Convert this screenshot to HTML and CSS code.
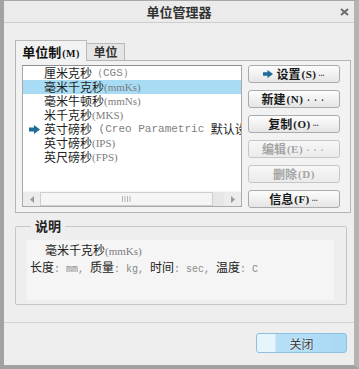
FILE: index.html
```html
<!DOCTYPE html>
<html lang="zh">

<head>
    <meta charset="UTF-8">
    <title>单位管理器</title>
    <link rel="stylesheet" href="styles.css">
</head>

<body>
    <div class="window">
        <div class="titlebar">
            <span></span>
            <span class="title">单位管理器</span>
            <span class="close">
                <svg width="9" height="8" viewBox="0 0 9 8">
                    <path d="M1 1L8 7M8 1L1 7" stroke="#6a6a6a" stroke-width="2" />
                </svg>
            </span>
        </div>

        <div class="client">
            <div class="tabs">
                <div class="tab active">单位制<span class="key">(M)</span></div>
                <div class="tab">单位</div>
            </div>

            <div class="panel">
                <div class="listbox">
                    <ul class="items">
                        <li><span class="mark"></span>厘米克秒<span class="mono">（CGS）</span></li>
                        <li class="selected"><span class="mark"></span>毫米千克秒<span class="abbr">(mmKs)</span></li>
                        <li><span class="mark"></span>毫米牛顿秒<span class="abbr">(mmNs)</span></li>
                        <li><span class="mark"></span>米千克秒<span class="abbr">(MKS)</span></li>
                        <li>
                            <span class="mark">
                                <svg width="11" height="9" viewBox="0 0 11 9">
                                    <path d="M0 2.5H5V0L11 4.5L5 9V6.5H0Z" fill="#1f6d99" />
                                </svg>
                            </span>英寸磅秒<span class="mono">&nbsp;(Creo Parametric&nbsp;</span>默认设置<span class="mono">)</span>
                        </li>
                        <li><span class="mark"></span>英寸磅秒<span class="abbr">(IPS)</span></li>
                        <li><span class="mark"></span>英尺磅秒<span class="abbr">(FPS)</span></li>
                    </ul>
                    <div class="hscroll">
                        <span class="sb-btn">
                            <svg width="4" height="7" viewBox="0 0 4 7"><path d="M4 0L0 3.5L4 7Z" fill="#9a9a9a" /></svg>
                        </span>
                        <span class="sb-thumb">
                            <svg width="9" height="6" viewBox="0 0 9 6">
                                <path d="M0.5 0V6M3 0V6M5.5 0V6M8 0V6" stroke="#b4b4b4" stroke-width="1" />
                            </svg>
                        </span>
                        <span class="sb-track"></span>
                        <span class="sb-btn">
                            <svg width="4" height="7" viewBox="0 0 4 7"><path d="M0 0L4 3.5L0 7Z" fill="#9a9a9a" /></svg>
                        </span>
                    </div>
                </div>

                <div class="actions">
                    <button class="btn">
                        <svg width="10" height="8" viewBox="0 0 10 8">
                            <path d="M0 2.2H4.5V0L10 4L4.5 8V5.8H0Z" fill="#1f6d99" />
                        </svg>
                        设置<span class="key">(S)</span><span class="dots">…</span>
                    </button>
                    <button class="btn">新建<span class="key">(N)</span><span class="dots">...</span></button>
                    <button class="btn">复制<span class="key">(O)</span><span class="dots">…</span></button>
                    <button class="btn" disabled>编辑<span class="key">(E)</span><span class="dots">...</span></button>
                    <button class="btn" disabled>删除<span class="key">(D)</span></button>
                    <button class="btn">信息<span class="key">(F)</span><span class="dots">…</span></button>
                </div>
            </div>

            <fieldset class="info">
                <legend>说明</legend>
                <div class="info-body">
                    <p class="info-name">毫米千克秒<span class="abbr">(mmKs)</span></p>
                    <p>长度<span class="unit">: mm, </span>质量<span class="unit">: kg, </span>时间<span class="unit">: sec, </span>温度<span class="unit">: C</span></p>
                </div>
            </fieldset>

            <div class="footer">
                <button class="btn-close">关闭</button>
            </div>
        </div>
    </div>
</body>

</html>
```

FILE: styles.css
```css
body {
    margin: 0;
    padding: 0;
    background-color: #a4a4a4;
    font-family: "Noto Sans CJK SC", "Liberation Sans", sans-serif;
    color: #222;
}

.window {
    width: 359px;
    height: 369px;
    box-sizing: border-box;
    border-left: 4px solid #a2a2a2;
    border-right: 5px solid #b4b4b4;
    border-top: 1px solid #a8a8a8;
    border-bottom: 4px solid #a2a2a2;
    background-color: #eeeeee;
    display: flex;
    flex-direction: column;
}

.titlebar {
    height: 21px;
    border-bottom: 1px solid #cdcdcd;
    background-color: #ebebeb;
    display: grid;
    grid-template-columns: 1fr auto 1fr;
    align-items: center;
}

.title {
    font-size: 13px;
    line-height: 21px;
    font-weight: bold;
    color: #333;
}

.close {
    justify-self: end;
    display: flex;
    padding-right: 5px;
}

.client {
    flex: 1;
    padding: 17px 3px 0 11px;
    display: flex;
    flex-direction: column;
}

/* tabs */

.tabs {
    display: flex;
    align-items: flex-end;
    margin-bottom: -1px;
}

.tab {
    box-sizing: border-box;
    height: 17px;
    width: 38px;
    margin-bottom: 1px;
    border: 1px solid #b9b9b9;
    border-left: none;
    border-bottom: none;
    background-color: #e5e5e5;
    font-size: 12px;
    line-height: 16px;
    font-weight: bold;
    text-align: center;
    color: #333;
}

.tab.active {
    position: relative;
    z-index: 1;
    width: 72px;
    height: 21px;
    margin-bottom: 0;
    border-left: 1px solid #b5b5b5;
    background-color: #f2f2f2;
    font-size: 13px;
    line-height: 21px;
    color: #111;
}

.key {
    font-family: "Liberation Serif", serif;
    font-weight: bold;
    font-size: 11px;
    letter-spacing: 0.5px;
    margin-left: 1px;
}

.tab .key {
    font-size: 10px;
}

.panel {
    box-sizing: border-box;
    height: 153px;
    border: 1px solid #b5b5b5;
    background-color: #f2f2f2;
    padding: 4px 0 0 6px;
    display: flex;
    gap: 6px;
}

/* list */

.listbox {
    box-sizing: border-box;
    width: 220px;
    height: 142px;
    border: 1px solid #a9a9a9;
    border-top-color: #8f8f8f;
    background-color: #fff;
    display: flex;
    flex-direction: column;
}

.items {
    flex: 1;
    list-style: none;
    margin: 0;
    padding: 0;
    overflow: hidden;
}

.items li {
    height: 14px;
    display: flex;
    align-items: center;
    white-space: nowrap;
    font-size: 12px;
    line-height: 14px;
    color: #222;
}

.items li.selected {
    background-color: #a8dcf4;
}

.mark {
    flex: none;
    width: 21px;
    display: flex;
    justify-content: center;
    padding-left: 2px;
    box-sizing: border-box;
}

.mono {
    font-family: "Liberation Mono", monospace;
    font-size: 11px;
    color: #808080;
}

.abbr {
    font-family: "Liberation Serif", serif;
    font-size: 11px;
    color: #7c7c7c;
}

.hscroll {
    height: 14px;
    display: flex;
    background-color: #e9e9e9;
    border-top: 1px solid #f6f6f6;
}

.sb-btn {
    width: 17px;
    display: flex;
    align-items: center;
    justify-content: center;
    background-color: #ececec;
}

.sb-thumb {
    box-sizing: border-box;
    width: 173px;
    border: 1px solid #cfcfcf;
    background-color: #f5f5f5;
    display: flex;
    align-items: center;
    justify-content: center;
}

.sb-track {
    flex: 1;
    background-color: #e6e6e6;
}

/* buttons */

.actions {
    width: 92px;
    display: flex;
    flex-direction: column;
    gap: 7px;
}

.btn {
    box-sizing: border-box;
    height: 18px;
    padding: 0;
    border: 1px solid #ababab;
    border-radius: 3px;
    background: linear-gradient(#fdfdfd, #e5e5e5);
    display: flex;
    align-items: center;
    justify-content: center;
    font-family: "Noto Sans CJK SC", "Liberation Sans", sans-serif;
    font-size: 12px;
    line-height: 16px;
    font-weight: bold;
    color: #1a1a1a;
}

.btn svg {
    margin-right: 4px;
}

.btn:disabled {
    color: #a5a5a5;
    background: linear-gradient(#f7f7f7, #ebebeb);
    border-color: #c6c6c6;
}

.dots {
    font-family: "Liberation Mono", monospace;
    font-size: 10px;
    font-weight: normal;
    letter-spacing: 1px;
    margin-left: 2px;
}

/* description */

.info {
    box-sizing: border-box;
    width: 332px;
    margin: 5px 0 0 0;
    padding: 6px 12px 4px 11px;
    border: 1px solid #c6c6c6;
    border-radius: 2px;
    min-width: 0;
}

.info legend {
    margin-left: 4px;
    padding: 0 4px;
    font-size: 13px;
    line-height: 16px;
    font-weight: bold;
    color: #222;
}

.info-body {
    height: 60px;
    box-sizing: border-box;
    padding: 2px 0 0 3px;
    background-color: #f5f5f5;
}

.info-body p {
    margin: 0;
    font-size: 12px;
    line-height: 16px;
    white-space: nowrap;
}

.info-body .info-name {
    padding-left: 15px;
}

.unit {
    font-family: "Liberation Mono", monospace;
    font-size: 10px;
    color: #8a8a8a;
}

/* footer */

.footer {
    margin-top: 17px;
    margin-left: -11px;
    margin-right: -3px;
    border-top: 1px solid #d2d2d2;
    padding: 10px 7px 0 0;
    display: flex;
    justify-content: flex-end;
}

.btn-close {
    width: 91px;
    height: 20px;
    border: 1px solid #8cc1e3;
    border-radius: 3px;
    background: linear-gradient(90deg, #e6f4fc 0, #e6f4fc 18px, #b7e0f7 19px, #a9d8f4);
    font-family: "Noto Sans CJK SC", "Liberation Sans", sans-serif;
    font-size: 12px;
    line-height: 18px;
    color: #3a3a3a;
    text-shadow: 0 0 2px #fff;
}
```
